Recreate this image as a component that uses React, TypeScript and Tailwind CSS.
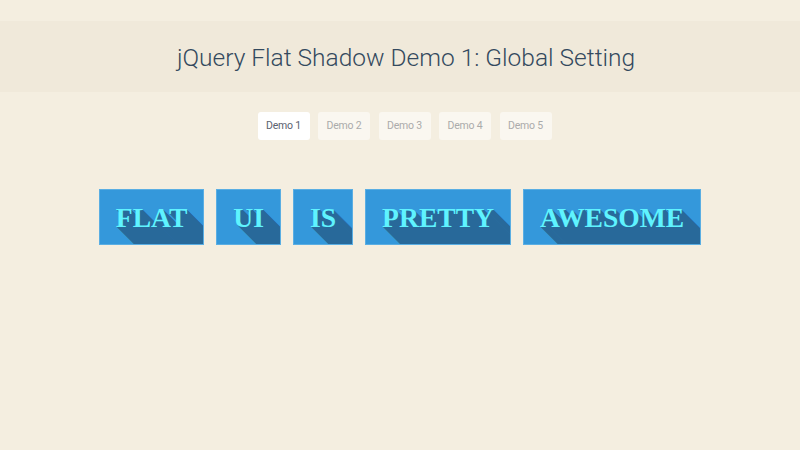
const demos = ["Demo 1", "Demo 2", "Demo 3", "Demo 4", "Demo 5"];
const words = ["FLAT", "UI", "IS", "PRETTY", "AWESOME"];

// long flat shadow, one step per pixel
const longShadow = Array.from({ length: 80 }, (_, i) => `${i + 1}px ${i + 1}px 0 #28699a`).join(", ");

export default function App() {
  return (
    <div className="min-h-[450px] bg-[#f4eee0] pt-[21px] font-['Roboto',sans-serif]">
      <header className="flex h-[71px] items-center justify-center bg-[#f0e9da] pl-[12px]">
        <h1 className="pt-[3px] text-[24.5px] font-light text-[#34495e]">
          jQuery Flat Shadow Demo 1: Global Setting
        </h1>
      </header>

      <nav className="mt-[20px] flex justify-center gap-[8.5px] pl-[9px]">
        {demos.map((label, i) => (
          <button
            key={label}
            className={
              i === 0
                ? "h-[28px] w-[52px] rounded-[3px] bg-white text-[10.5px] tracking-[-0.2px] text-[#5b6270]"
                : "h-[28px] w-[52px] rounded-[3px] bg-[#faf7f0] text-[10.5px] tracking-[-0.2px] text-[#ababab]"
            }
          >
            {label}
          </button>
        ))}
      </nav>

      <div className="mt-[49px] flex justify-center gap-[12px]">
        {words.map((word) => (
          <div
            key={word}
            className="flex h-[56px] items-center overflow-hidden border border-[#5aaee3] bg-[#3498db] px-[16px]"
          >
            <span
              className="pt-[2px] font-['Liberation_Serif',serif] text-[27.6px] font-bold leading-none text-[#5ff3ff]"
              style={{ textShadow: longShadow }}
            >
              {word}
            </span>
          </div>
        ))}
      </div>
    </div>
  );
}
